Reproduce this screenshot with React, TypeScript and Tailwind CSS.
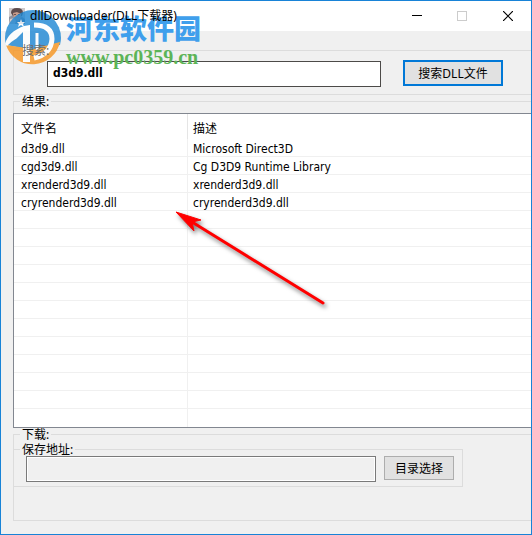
import {useState} from 'react'
import type {ReactNode} from 'react'

interface DllFile {
  name: string
  description: string
}

const files: DllFile[] = [
  {name: 'd3d9.dll', description: 'Microsoft Direct3D'},
  {name: 'cgd3d9.dll', description: 'Cg D3D9 Runtime Library'},
  {name: 'xrenderd3d9.dll', description: 'xrenderd3d9.dll'},
  {name: 'cryrenderd3d9.dll', description: 'cryrenderd3d9.dll'},
]

const VISIBLE_ROWS = 16

const AppIcon = () => (
  <svg width="16" height="16" viewBox="0 0 16 16" aria-hidden="true">
    <rect width="16" height="16" fill="#cfcacb" />
    <path d="M0 9l4-2 8 1 4 3v5H0z" fill="#8d929f" />
    <path d="M2 5q0-5 6-5t6 5l-1 3H4z" fill="#5d4c4e" />
    <path d="M4 5l4-1 4 2v4l-3 3-4-2z" fill="#c79c8b" />
    <path d="M5 6h2v1H5zM9 6h2v1H9z" fill="#6d5150" />
    <path d="M1 11l4-1 2 3-1 3H0z" fill="#d9c7c2" />
    <path d="M10 12l3-2 3 2v4h-6z" fill="#75849c" />
  </svg>
)

const TitleBar = () => (
  <header className="flex h-[30px] items-center justify-between bg-white pl-2">
    <div className="flex items-center gap-[5px]">
      <AppIcon />
      <h1 className="relative z-10 text-[12px] leading-4">dllDownloader(DLL下载器)</h1>
    </div>
    <div className="flex">
      <button type="button" aria-label="Minimize" className="flex h-[30px] w-[45px] items-center justify-center">
        <svg width="10" height="10" viewBox="0 0 10 10" shapeRendering="crispEdges">
          <path d="M0 4h10v1H0z" fill="#000" />
        </svg>
      </button>
      <button type="button" aria-label="Maximize" disabled className="flex h-[30px] w-[45px] items-center justify-center">
        <svg width="10" height="10" viewBox="0 0 10 10" fill="none" stroke="#ccc">
          <rect x=".5" y=".5" width="9" height="9" />
        </svg>
      </button>
      <button type="button" aria-label="Close" className="flex h-[30px] w-[47px] items-center justify-center">
        <svg width="10" height="10" viewBox="0 0 10 10" stroke="#000" strokeWidth="1.2">
          <path d="M0 0l10 10M10 0L0 10" />
        </svg>
      </button>
    </div>
  </header>
)

interface GroupProps {
  title: ReactNode
  className: string
  children: ReactNode
}

const Group = ({title, className, children}: GroupProps) => (
  <fieldset className={`min-w-0 border-[#dcdcdc] ${className}`}>
    <legend className="ml-1.5 px-0.5 leading-[13px]">{title}</legend>
    {children}
  </fieldset>
)

const ResultTable = () => (
  <div className="-ml-px border-y border-l border-[#828790] bg-white">
    <table className="w-full table-fixed border-separate border-spacing-0 text-left">
      <colgroup>
        <col className="w-[174px]" />
        <col />
      </colgroup>
      <thead>
        <tr className="h-[25px]">
          <th className="border-r border-[#e5e5e5] p-0 pt-1 pl-[7px] font-normal leading-4">文件名</th>
          <th className="p-0 pt-1 pl-[5px] font-normal leading-4">描述</th>
        </tr>
      </thead>
      <tbody className="font-['DejaVu_Sans_Condensed','Noto_Sans_CJK_SC',sans-serif] text-[12px]">
        {Array.from({length: VISIBLE_ROWS}, (_, i) => {
          const line = i < VISIBLE_ROWS - 1 ? 'border-b' : ''
          return (
            <tr key={i} className="h-[18px]">
              <td className={`border-r border-[#f0f0f0] p-0 pt-[3px] pl-[7px] leading-[14px] ${line}`}>{files[i]?.name}</td>
              <td className={`border-[#f0f0f0] p-0 pt-[3px] pl-[5px] leading-[14px] ${line}`}>{files[i]?.description}</td>
            </tr>
          )
        })}
      </tbody>
    </table>
  </div>
)

const Watermark = () => (
  <div className="pointer-events-none absolute top-[7px] left-0.5 flex items-start gap-[3px]">
    <svg width="60" height="60" viewBox="0 0 60 60" className="opacity-80" aria-hidden="true">
      <path d="M2 30A28 28 0 0 1 58 30Q58 33 57 37L30 42 3 37Q2 34 2 30z" fill="#1c87d4" />
      <path d="M3 37L30 41 57 34A28 28 0 0 1 3 37z" fill="#f7941e" />
      <path d="M2 36Q5 24 21 18L27 17V54H20V29Q11 30 4 38z" fill="#fff" />
      <path d="M12 32L20 24V37H12z" fill="#1c87d4" />
      <path d="M20 24L27 17V54H20z" fill="#fff" />
      <path d="M31 17Q49 17 49 31Q48 46 31 50" fill="none" stroke="#fff" strokeWidth="5" />
      <path d="M34 25V42" stroke="#fff" strokeWidth="3" />
      <path d="M18 11l1 3h3l-2 2 1 3-3-2-3 2 1-3-2-2h3z" fill="#fff" />
    </svg>
    <div>
      <p className="font-['Noto_Sans_CJK_SC',sans-serif] text-[27px] leading-10 font-black text-[#3f9fec]">河东软件园</p>
      <p className="font-['Liberation_Serif',serif] text-[20px] leading-[18px] font-bold text-[#5cb457]">www.pc0359.cn</p>
    </div>
  </div>
)

const Arrow = () => (
  <svg
    className="pointer-events-none absolute top-[205px] left-[169px] drop-shadow-[2px_3px_2px_rgba(0,0,0,0.5)]"
    width="165"
    height="110"
    viewBox="0 0 165 110"
    aria-hidden="true"
  >
    <path d="M22 16L153 97" stroke="#f00" strokeWidth="3" strokeLinecap="round" />
    <path d="M6 6L31 14 22 16 24 25z" fill="#f00" stroke="#f00" strokeLinejoin="round" />
  </svg>
)

const App = () => {
  const [query, setQuery] = useState('d3d9.dll')

  return (
    <div className="relative flex min-h-screen flex-col overflow-hidden border border-[#1883d7] bg-[#f0f0f0] font-['Noto_Sans','Noto_Sans_CJK_SC',sans-serif] text-[12px] text-black">
      <TitleBar />
      <main className="pt-[13px] pb-3 pl-3">
        <Group
          title={<span className="relative z-10 text-[#6b6b6b]">搜索:</span>}
          className="border-y border-l pb-[7px]"
        >
          <div className="flex items-start gap-[22px] pt-[3px] pr-7 pl-[33px]">
            <input
              type="text"
              aria-label="搜索"
              value={query}
              onChange={(e) => setQuery(e.target.value)}
              className="mt-px h-[26px] min-w-0 flex-1 border border-[#4c4a48] bg-white px-[5px] pb-0.5 font-['DejaVu_Sans_Condensed',sans-serif] text-[12px] font-bold outline-none"
            />
            <button type="button" className="h-[26px] w-[100px] border-2 border-[#0078d7] bg-[#e1e1e1] pt-0.5">
              搜索DLL文件
            </button>
          </div>
        </Group>
        <Group title="结果:" className="border-t border-l">
          <div className="pt-[5px]">
            <ResultTable />
          </div>
        </Group>
        <Group title="下载:" className="border-y border-l pb-[33px]">
          <div className="pt-0.5 pr-[68px]">
            <Group title="保存地址:" className="-ml-px border pb-1">
              <div className="flex items-start gap-2 pr-2 pl-3">
                <input
                  type="text"
                  aria-label="保存地址"
                  readOnly
                  className="h-[26px] min-w-0 flex-1 border border-[#7a7a7a] bg-[#f0f0f0] px-1 shadow-[inset_0_0_0_1px_#fff] outline-none"
                />
                <button type="button" className="h-6 w-[70px] border border-[#adadad] bg-[#e1e1e1] pt-0.5">
                  目录选择
                </button>
              </div>
            </Group>
          </div>
        </Group>
      </main>
      <Arrow />
      <Watermark />
    </div>
  )
}

export default App
